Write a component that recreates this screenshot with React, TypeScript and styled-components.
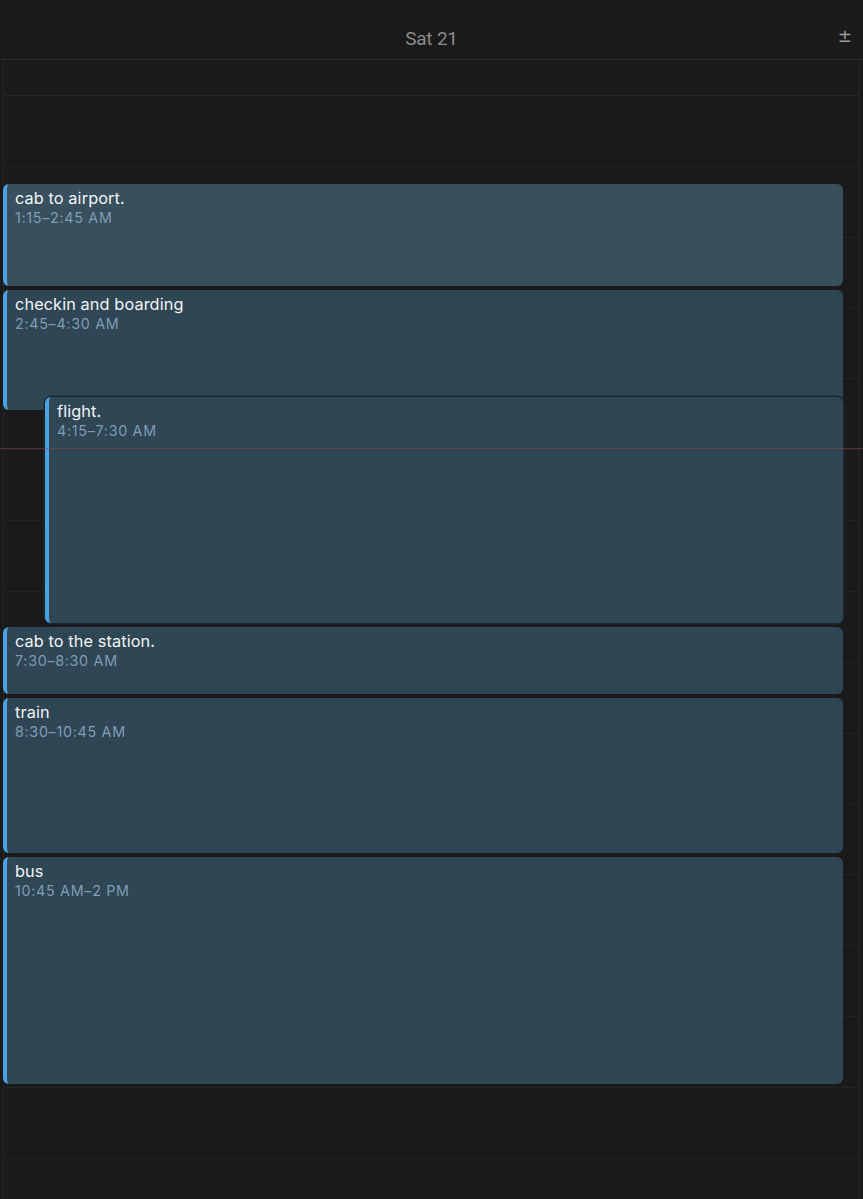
import React from 'react'
import styled, { createGlobalStyle } from 'styled-components'

const HOUR = 70.87

type CalEvent = {
  title: string
  time: string
  start: number
  end: number
  indent?: number
  tint?: string
  outlined?: boolean
}

const events: CalEvent[] = [
  { title: 'cab to airport.', time: '1:15\u20132:45 AM', start: 1.25, end: 2.75, tint: '#384f5e' },
  { title: 'checkin and boarding', time: '2:45\u20134:30 AM', start: 2.75, end: 4.5 },
  { title: 'flight.', time: '4:15\u20137:30 AM', start: 4.25, end: 7.5, indent: 42, outlined: true },
  { title: 'cab to the station.', time: '7:30\u20138:30 AM', start: 7.5, end: 8.5 },
  { title: 'train', time: '8:30\u201310:45 AM', start: 8.5, end: 10.75 },
  { title: 'bus', time: '10:45 AM\u20132 PM', start: 10.75, end: 14 },
]

// current time, in hours
const NOW = 4.97

const App: React.FC = () => {
  const hours = Array.from({ length: 16 }, (_, i) => i)

  return (
    <>
      <GlobalStyle />
      <Screen>
        <Header>
          <DayTitle>Sat 21</DayTitle>
          <ZoomToggle>±</ZoomToggle>
        </Header>
        <DayColumn>
          <AllDayRow />
          <Timeline>
            {hours.map((h) => (
              <HourRow key={h} />
            ))}
            {events.map((ev) => (
              <EventCard
                key={ev.title}
                $indent={ev.indent || 0}
                $tint={ev.tint}
                $outlined={ev.outlined}
                style={{
                  top: ev.start * HOUR - 0.5,
                  height: (ev.end - ev.start) * HOUR - 4,
                }}
              >
                <EventTitle>{ev.title}</EventTitle>
                <EventTime>{ev.time}</EventTime>
              </EventCard>
            ))}
            <NowLine style={{ top: NOW * HOUR }} />
          </Timeline>
        </DayColumn>
      </Screen>
    </>
  )
}

const GlobalStyle = createGlobalStyle`
  html, body {
    margin: 0;
    padding: 0;
    background: #1a1a1a;
  }
  body {
    font-family: Inter, "Noto Sans", "Liberation Sans", sans-serif;
    -webkit-font-smoothing: antialiased;
  }
`

const Screen = styled.div`
  width: 863px;
  height: 1199px;
  overflow: hidden;
  background: #1a1a1a;
  display: flex;
  flex-direction: column;
`

// header
const Header = styled.div`
  height: 59px;
  flex-shrink: 0;
  display: flex;
  align-items: center;
  justify-content: center;
  position: relative;
  border-bottom: 1px solid #2a2a2a;
`

const DayTitle = styled.div`
  font-family: Roboto, "Liberation Sans", sans-serif;
  font-size: 19px;
  color: #8b8b8b;
  letter-spacing: -0.2px;
  margin-top: 18px;
`

const ZoomToggle = styled.div`
  position: absolute;
  right: 11px;
  top: 26px;
  font-family: "DejaVu Sans", sans-serif;
  font-size: 17px;
  color: #9a9a9a;
`

const DayColumn = styled.div`
  flex: 1;
  margin-left: 3px;
  margin-right: 3px;
  border-left: 1px solid #262626;
  border-right: 1px solid #262626;
  display: flex;
  flex-direction: column;
`

const AllDayRow = styled.div`
  height: 35px;
  flex-shrink: 0;
  border-bottom: 1px solid #262626;
`

const Timeline = styled.div`
  position: relative;
  display: flex;
  flex-direction: column;
`

const HourRow = styled.div`
  height: ${HOUR}px;
  flex-shrink: 0;
  box-sizing: border-box;
  border-bottom: 1px solid #242424;
`

const EventCard = styled.div<{ $indent: number; $tint?: string; $outlined?: boolean }>`
  position: absolute;
  left: ${(p) => p.$indent - 1}px;
  right: 16px;
  box-sizing: border-box;
  background: ${(p) => p.$tint || '#2f4655'};
  border-radius: 6px;
  border-left: 4px solid #4ba2e0;
  padding: 4px 0 0 8px;
  overflow: hidden;
  ${(p) =>
    p.$outlined &&
    `
    box-shadow: 0 0 0 1.5px #1b2731;
  `}
`

const EventTitle = styled.div`
  font-size: 16.3px;
  line-height: 20px;
  color: #f2f4f6;
  letter-spacing: 0.1px;
`

const EventTime = styled.div`
  font-size: 14.3px;
  line-height: 20px;
  color: #7f9db4;
  letter-spacing: 0.7px;
`

const NowLine = styled.div`
  position: absolute;
  left: -4px;
  right: -4px;
  height: 1px;
  background: rgba(150, 70, 70, 0.5);
  pointer-events: none;
`

export default App
